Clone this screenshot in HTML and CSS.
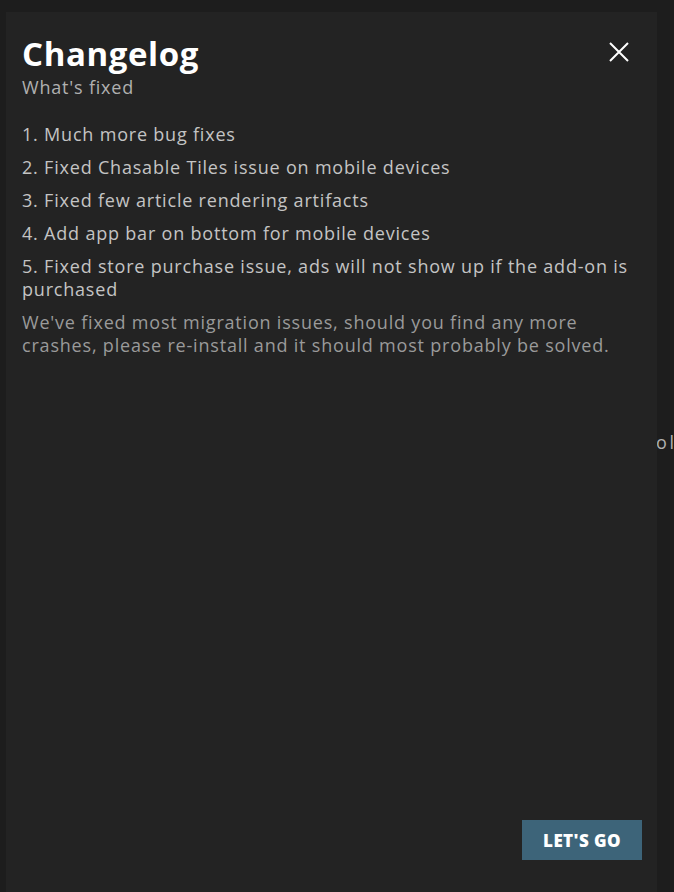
FILE: index.html
```html
<!DOCTYPE html>
<html>
<head>
<link rel="stylesheet" href="styles.css">
</head>
<body>

<div class="page">
	<div class="dialog">
		<div class="dialog-head">
			<div>
				<h1 class="title">Changelog</h1>
				<p class="subtitle">What's fixed</p>
			</div>
			<button class="close" aria-label="Close">
				<svg width="20" height="20" viewBox="0 0 20 20">
					<path d="M1 1 L19 19 M19 1 L1 19" stroke="#ffffff" stroke-width="2" fill="none"/>
				</svg>
			</button>
		</div>

		<ol class="fixes">
			<li>1. Much more bug fixes</li>
			<li>2. Fixed Chasable Tiles issue on mobile devices</li>
			<li>3. Fixed few article rendering artifacts</li>
			<li>4. Add app bar on bottom for mobile devices</li>
			<li>5. Fixed store purchase issue, ads will not show up if the add-on is purchased</li>
		</ol>
		<p class="note">We've fixed most migration issues, should you find any more crashes, please re-install and it should most probably be solved.</p>

		<div class="dialog-foot">
			<button class="button">LET'S GO</button>
		</div>
	</div>
	<div class="behind"><span>o l</span></div>
</div>

</body>
</html>
```

FILE: styles.css
```css
html, body {
	margin: 0;
	height: 100%;
}

body {
	background-color: #1d1d1d;
	font-family: "Open Sans", sans-serif;
	color: #c4c4c4;
	letter-spacing: 0.8px;
}

.page {
	display: flex;
	height: 100%;
	padding: 12px 0 0 6px;
	box-sizing: border-box;
}

.dialog {
	width: 651px;
	flex: none;
	background-color: #232323;
	padding: 20px 28px 0 16px;
	box-sizing: border-box;
	display: flex;
	flex-direction: column;
}

.dialog-head {
	display: flex;
	justify-content: space-between;
	align-items: flex-start;
}

.title {
	margin: 0;
	font-size: 33px;
	line-height: 44px;
	font-weight: 700;
	color: #ffffff;
	letter-spacing: 0.6px;
}

.subtitle {
	margin: 0;
	font-size: 18px;
	line-height: 22px;
	color: #b0b0b0;
}

.close {
	background: none;
	border: none;
	padding: 0;
	margin-top: 10px;
	cursor: pointer;
	line-height: 0;
}

.fixes {
	list-style: none;
	margin: 25px 0 0;
	padding: 0;
}

.fixes li {
	font-size: 18px;
	line-height: 23px;
	margin-bottom: 10px;
}

.note {
	margin: 0;
	font-size: 18px;
	line-height: 23px;
	color: #9a9a9a;
}

.dialog-foot {
	margin-top: auto;
	display: flex;
	justify-content: flex-end;
	padding-bottom: 32px;
	margin-right: -13px;
}

.button {
	background-color: #3d6479;
	border: none;
	color: #ffffff;
	font-family: "Open Sans", sans-serif;
	font-weight: 800;
	font-size: 17px;
	letter-spacing: 0.4px;
	width: 120px;
	height: 40px;
	padding: 0;
	cursor: pointer;
}

.behind {
	flex: 1;
	overflow: hidden;
	white-space: nowrap;
	padding-top: 418px;
	font-size: 18px;
	letter-spacing: 0;
	word-spacing: -2px;
	text-indent: -1px;
	color: #b0b0b0;
}
```
